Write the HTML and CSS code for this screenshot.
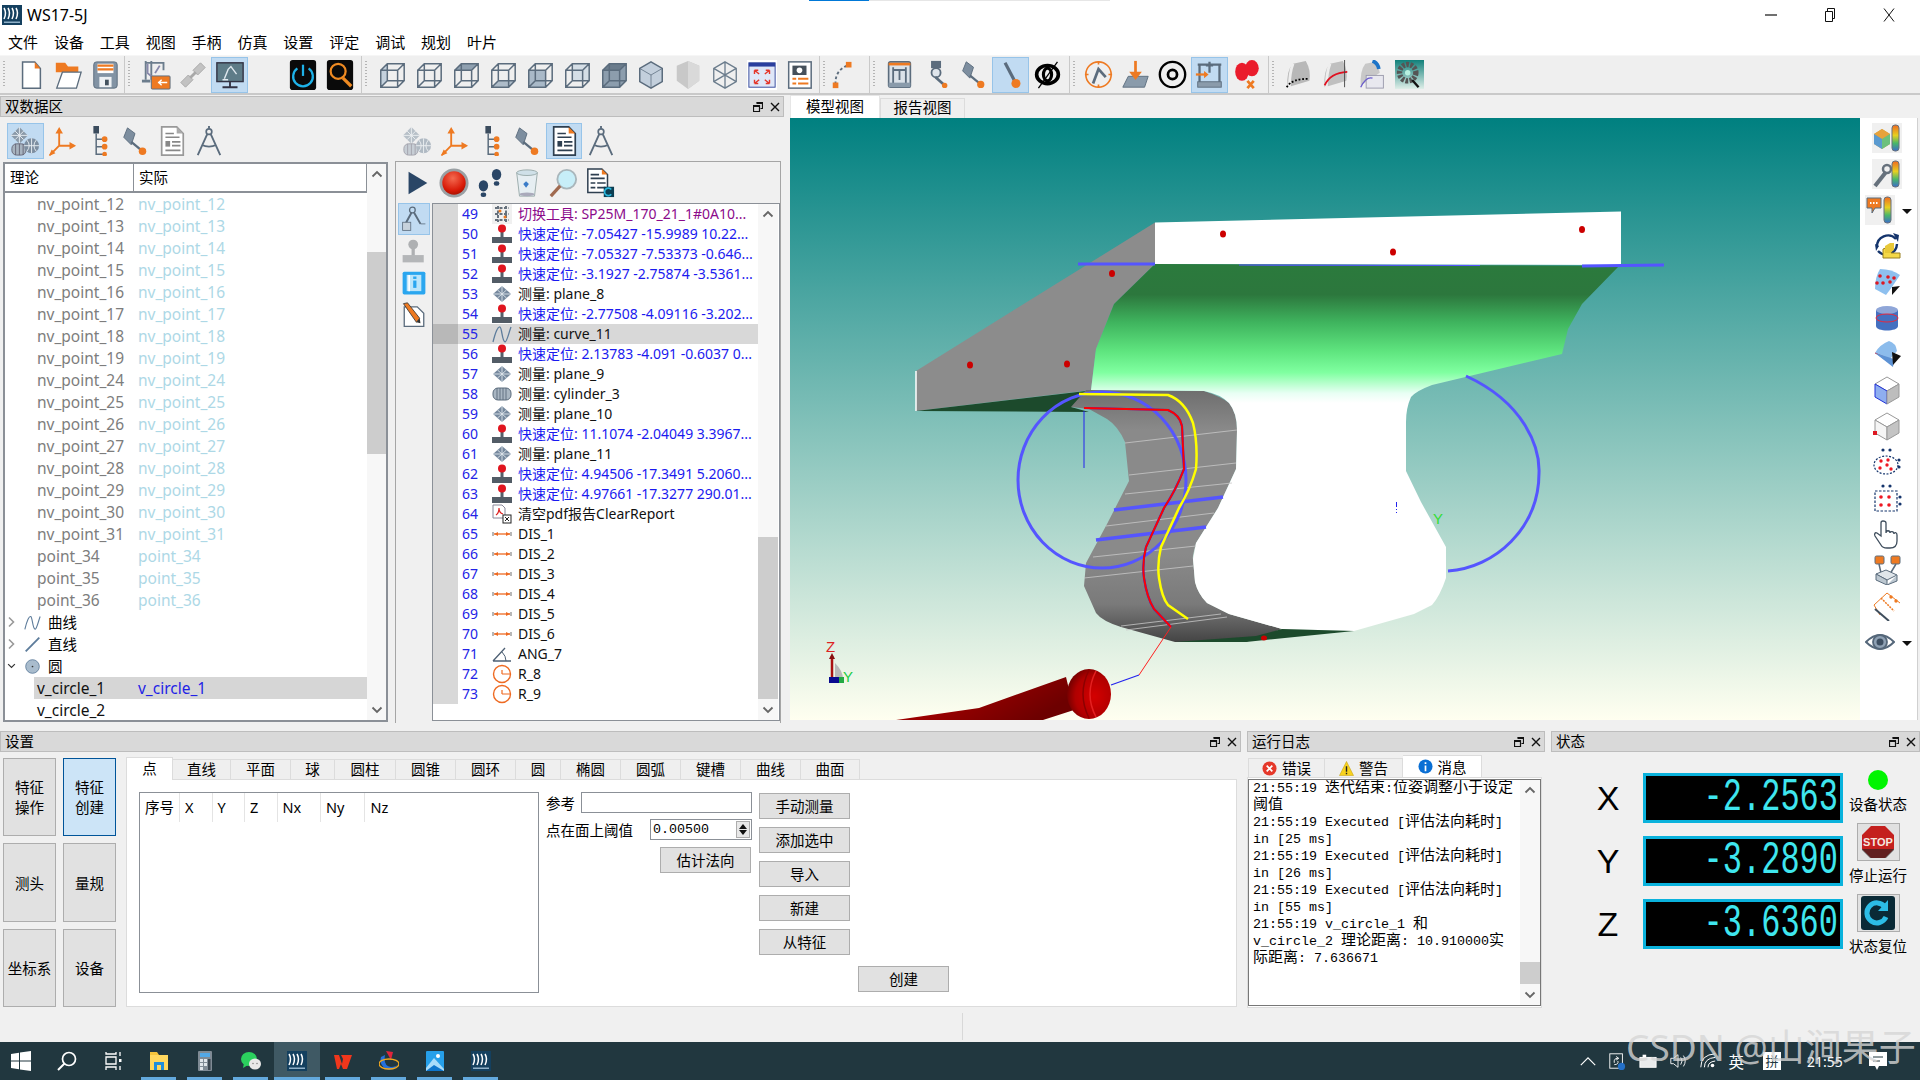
FILE: index.html
```html
<!DOCTYPE html>
<html lang="zh">
<head>
<meta charset="utf-8">
<title>WS17-5J</title>
<link rel="stylesheet" href="styles.css">
</head>
<body>
<svg class="defs" xmlns="http://www.w3.org/2000/svg">
  <symbol id="logo" viewBox="0 0 20 20"><rect width="20" height="20" fill="#14405f"/><g fill="none" stroke="#fff" stroke-width="1.5"><path d="M2 3q3 5 0 11"/><path d="M6 3q3 5 0 11"/><path d="M10 3q3 5 0 11"/><path d="M14 3q3 5 0 11"/></g><rect x="2" y="16.500" width="16" height="1.500" fill="#8fb0c8"/></symbol>
  <symbol id="pin" viewBox="0 0 10 10"><path d="M3.500 .5h6v6h-2M.5 3.500h6v6h-6zM.5 3.500" fill="none" stroke="#111" stroke-width="1.200"/><path d="M3.500 .5h6v1.500h-6zM.5 3.500h6v1.500h-6z" fill="#111"/></symbol>
  <symbol id="cls" viewBox="0 0 10 10"><path d="M1 1l8 8M9 1l-8 8" stroke="#111" stroke-width="1.400" fill="none"/></symbol>
  <symbol id="up" viewBox="0 0 12 8"><path d="M1.500 6.500L6 2l4.500 4.500" fill="none" stroke="#666" stroke-width="1.800"/></symbol>
  <symbol id="dn" viewBox="0 0 12 8"><path d="M1.500 1.500L6 6l4.500-4.500" fill="none" stroke="#666" stroke-width="1.800"/></symbol>
  <symbol id="cube" viewBox="0 0 32 32"><path d="M4 11h18v18H4zM4 11l7-7h18v18l-7 7M22 11l7-7M4 29l7-7h18M11 4v18" fill="none" stroke="#5b6c7d" stroke-width="1.600"/></symbol>

  <symbol id="new" viewBox="0 0 32 32"><path d="M7 2h13l6 7v21H7z" fill="#fff" stroke="#5b6c7d" stroke-width="1.600"/><path d="M20 2l6 7h-6z" fill="#ee7a22"/></symbol>
  <symbol id="open" viewBox="0 0 32 32"><path d="M3 3h10l3 4h11v6H3v16z" fill="#ee7a22"/><path d="M10 13h20l-5 17H4z" fill="#fff" stroke="#5b6c7d" stroke-width="1.400"/></symbol>
  <symbol id="save" viewBox="0 0 32 32"><rect x="4" y="2" width="25" height="28" rx="3" fill="#8293a4" stroke="#5b6c7d"/><rect x="8" y="4" width="17" height="10" fill="#fff"/><path d="M8 6h17M8 10h17" stroke="#ee7a22" stroke-width="2.500"/><rect x="10" y="18" width="13" height="11" fill="#eef1f4"/><rect x="16" y="21" width="4" height="6" fill="#44525f"/></symbol>
  <symbol id="robotbox" viewBox="0 0 32 32"><path d="M5 1v20M11 1v20M5 3h19v8" fill="none" stroke="#6c7d8d" stroke-width="2"/><path d="M7 4v10l6 5M20 6l-5 8" fill="none" stroke="#88a" stroke-width="2"/><rect x="1" y="21" width="9" height="3" fill="#6c7d8d"/><rect x="11" y="17" width="20" height="14" rx="1" fill="#ee7a22" stroke="#5b6c7d"/><path d="M18 24h10M22 21l-3 3 3 3" stroke="#fff" stroke-width="1.500" fill="none"/></symbol>
  <symbol id="link" viewBox="0 0 32 32"><g fill="#c2c2c2" stroke="#a8a8a8"><path d="M3 24l8-8 5 5-8 8z"/><path d="M16 11l8-8 5 5-8 8z"/></g><path d="M13 19l6-6" stroke="#a8a8a8" stroke-width="3"/></symbol>
  <symbol id="monitor" viewBox="0 0 32 32"><rect x="2" y="3" width="28" height="20" fill="#5e7c88" stroke="#334" stroke-width="1.500"/><path d="M10 20l4-10 3-3 3 4 3 4M8 21h6" fill="none" stroke="#dfe8ee" stroke-width="1.500"/><path d="M16 23v5M8 29h16" stroke="#334" stroke-width="2"/></symbol>
  <symbol id="power" viewBox="0 0 32 32"><rect x="2" y="0" width="28" height="32" rx="3" fill="#0a0a0a"/><path d="M10 9a10.500 10.500 0 1 0 12 0" fill="none" stroke="#1eb2e8" stroke-width="2.400"/><path d="M16 5v12" stroke="#1eb2e8" stroke-width="2.400"/></symbol>
  <symbol id="find" viewBox="0 0 32 32"><rect x="2" y="0" width="28" height="32" rx="3" fill="#0a0a0a"/><circle cx="14" cy="12" r="8" fill="none" stroke="#ee8a22" stroke-width="2.400"/><path d="M19 19l9 9" stroke="#ee8a22" stroke-width="3.500"/></symbol>
  <symbol id="hex" viewBox="0 0 32 32"><path d="M16 2l12 7v14l-12 7-12-7V9z" fill="#c3cfdc" stroke="#5b6c7d" stroke-width="1.600"/><path d="M4 9l12 7 12-7M16 16v14" fill="none" stroke="#5b6c7d" stroke-width=".8"/></symbol>
  <symbol id="shield" viewBox="0 0 32 32"><path d="M16 1l12 5v16l-12 9-12-9V6z" fill="#c8c8c8"/><path d="M16 1l12 5v16l-12 9z" fill="#d9d9d9"/></symbol>
  <symbol id="hexw" viewBox="0 0 32 32"><path d="M16 2l12 7v14l-12 7-12-7V9zM4 9l24 14M28 9L4 23M16 2v28" fill="none" stroke="#6c7d8d" stroke-width="1.400"/></symbol>
  <symbol id="full" viewBox="0 0 32 32"><rect width="32" height="32" fill="#fff"/><rect x="2" y="3" width="28" height="26" fill="#dfe7f8" stroke="#33479a"/><rect x="2" y="3" width="28" height="4" fill="#2a3f9e"/><path d="M8 11l5 4M8 11h4M8 11v4M24 11l-5 4M24 11h-4M24 11v4M8 25l5-4M8 25h4M8 25v-4M24 25l-5-4M24 25h-4M24 25v-4" stroke="#e4352a" stroke-width="1.500" fill="none"/></symbol>
  <symbol id="camrep" viewBox="0 0 32 32"><rect x="5" y="2" width="24" height="28" fill="#fff" stroke="#5b6c7d" stroke-width="1.600"/><rect x="9" y="6" width="15" height="10" fill="#45505b"/><circle cx="16.500" cy="11" r="3" fill="#fff"/><path d="M9 20h4M15 20h11M9 25h4M15 25h11" stroke="#ee7a22" stroke-width="2"/></symbol>
  <symbol id="curvept" viewBox="0 0 32 32"><path d="M7 26q-1-14 12-20" fill="none" stroke="#5b6c7d" stroke-width="2" stroke-dasharray="3 2.500"/><rect x="18" y="2" width="6" height="6" fill="#ee7a22"/><rect x="4" y="24" width="6" height="6" fill="#ee7a22"/></symbol>
  <symbol id="cmm" viewBox="0 0 32 32"><rect x="4" y="2" width="24" height="28" rx="2" fill="#dbe2e9" stroke="#5b6c7d" stroke-width="1.800"/><rect x="4" y="3" width="24" height="3" fill="#ee7a22"/><path d="M9 8v18M23 8v18M9 11h14M16 11v11" fill="none" stroke="#5b6c7d" stroke-width="2"/><rect x="4" y="25" width="24" height="5" fill="#8a9bab"/></symbol>
  <symbol id="probe2" viewBox="0 0 32 32"><rect x="10" y="1" width="11" height="8" fill="#5b6c7d"/><circle cx="15.500" cy="14" r="5" fill="#dfe5eb" stroke="#5b6c7d" stroke-width="2"/><path d="M15 19l9 8" stroke="#5b6c7d" stroke-width="3"/><circle cx="25" cy="28" r="3" fill="#ee7a22"/></symbol>
  <symbol id="probe" viewBox="0 0 32 32"><path d="M8 2l8 6-4 12-8-8z" fill="#7d8e9f" stroke="#5b6c7d"/><path d="M12 17l11 9" stroke="#5b6c7d" stroke-width="2.500"/><circle cx="24" cy="27" r="4" fill="#ee7a22"/></symbol>
  <symbol id="stylus" viewBox="0 0 32 32"><path d="M10 3l10 19" stroke="#5b6c7d" stroke-width="3.500"/><circle cx="22" cy="26" r="5" fill="#ee7a22"/></symbol>
  <symbol id="eyes" viewBox="0 0 32 32"><ellipse cx="16" cy="16" rx="12" ry="10" fill="none" stroke="#000" stroke-width="4"/><ellipse cx="16" cy="16" rx="4.500" ry="7" fill="none" stroke="#000" stroke-width="3.500"/><path d="M6 31L27 2" stroke="#000" stroke-width="1.400"/></symbol>
  <symbol id="armc" viewBox="0 0 32 32"><circle cx="16" cy="16" r="14" fill="none" stroke="#ee7a22" stroke-width="1.800"/><path d="M16 1v4M16 27v4M1 16h4M27 16h4" stroke="#ee7a22" stroke-width="1.800"/><path d="M10 26l6-16 8 9" fill="none" stroke="#5b6c7d" stroke-width="3"/></symbol>
  <symbol id="drop" viewBox="0 0 32 32"><path d="M8 18h22l-4 12H2z" fill="#8a9bab" stroke="#5b6c7d"/><path d="M16 1v18" stroke="#ee7a22" stroke-width="3"/><path d="M9 13h14l-7 9z" fill="#ee7a22"/></symbol>
  <symbol id="target" viewBox="0 0 32 32"><circle cx="16" cy="16" r="14" fill="none" stroke="#000" stroke-width="2.600"/><circle cx="16" cy="16" r="5" fill="none" stroke="#000" stroke-width="3"/></symbol>
  <symbol id="cmm2" viewBox="0 0 32 32"><path d="M5 5v20M27 5v20M3 5h26" fill="none" stroke="#5b6c7d" stroke-width="2.500"/><path d="M16 2v12M12 6h8" stroke="#5b6c7d" stroke-width="2.500"/><rect x="3" y="24" width="26" height="6" fill="#8a9bab" stroke="#5b6c7d"/><path d="M1 16h12" stroke="#ee7a22" stroke-width="2.500"/><path d="M10 12l5 4-5 4z" fill="#ee7a22"/></symbol>
  <symbol id="reddots" viewBox="0 0 32 32"><ellipse cx="11" cy="13" rx="7.500" ry="10" fill="#ea1c2c"/><ellipse cx="22" cy="9" rx="7.500" ry="9" fill="#ea1c2c"/><path d="M17 23l7 8M24 23l-7 8" stroke="#ee7a22" stroke-width="3"/></symbol>
  <symbol id="blade1" viewBox="0 0 32 32"><path d="M4 30q-2-18 6-26l14-3q6 10 4 22z" fill="#b8b8b8"/><path d="M10 4q-4 10-4 26" stroke="#eee" stroke-width="3" fill="none"/><path d="M3 30q6-10 25-9" fill="none" stroke="#000" stroke-width="2" stroke-dasharray="2 2"/></symbol>
  <symbol id="blade2" viewBox="0 0 32 32"><path d="M4 30q-2-18 6-26l14-3q6 10 4 22z" fill="#c0c0c0"/><path d="M10 4q-4 10-4 26" stroke="#eee" stroke-width="3" fill="none"/><path d="M4 28q6-14 25-15" fill="none" stroke="#e01020" stroke-width="2"/><path d="M26 0v30" stroke="#444"/></symbol>
  <symbol id="blade3" viewBox="0 0 32 32"><path d="M3 28q-1-16 5-24l12-2q3 6 4 12z" fill="#c8c8c8"/><rect x="9" y="17" width="19" height="14" fill="#e8e8ef" stroke="#99a"/><path d="M3 30q6-12 13-10" stroke="#6a5ccc" fill="none" stroke-width="1.500"/><path d="M16 1q6 2 7 9" stroke="#1c74c8" stroke-width="4" fill="none"/></symbol>
  <symbol id="gear" viewBox="0 0 32 32"><defs><linearGradient id="gg" x1="0" y1="0" x2="0" y2="1"><stop offset="0" stop-color="#11807a"/><stop offset="1" stop-color="#dfeee8"/></linearGradient></defs><rect width="32" height="32" fill="url(#gg)"/><circle cx="14" cy="14" r="9" fill="none" stroke="#555" stroke-width="6" stroke-dasharray="3 1.500"/><circle cx="14" cy="14" r="3" fill="#b8f0e0"/><path d="M19 22l7 8" stroke="#111" stroke-width="2.500"/></symbol>

  <symbol id="p-model" viewBox="0 0 32 32"><path d="M10 1l9 9-9 9-9-9z" fill="#8a99a8"/><path d="M5.500 5.500l9 9M14.500 5.500l-9 9M10 1v18M1 10h18" stroke="#e8eef2" stroke-width="1"/><rect x="2" y="19" width="15" height="12" rx="5" fill="#a7b3bf" stroke="#667"/><path d="M6 19v12M10 19v12M14 19v12" stroke="#667"/><circle cx="23" cy="21" r="8" fill="#7d8ea0"/><path d="M15 21h16M23 13v16M18 15q5 6 0 12M28 15q-5 6 0 12" stroke="#e8eef2" fill="none"/></symbol>
  <symbol id="p-axis" viewBox="0 0 32 32"><path d="M13 21V4M13 21h16M13 21L3 31" stroke="#ee7a22" stroke-width="2" fill="none"/><path d="M13 1l-4 7h8zM31 21l-7-4v8zM2 32l3-7 4 4z" fill="#ee7a22"/></symbol>
  <symbol id="p-tree" viewBox="0 0 32 32"><rect x="10" y="0" width="6" height="8" fill="#3b4c5e"/><path d="M13 8v22h8M13 14h8M13 22h8" stroke="#5b6c7d" stroke-width="1.600" fill="none"/><circle cx="22" cy="14" r="3" fill="#ee7a22"/><circle cx="22" cy="22" r="3" fill="#ee7a22"/><circle cx="22" cy="30" r="2.500" fill="#ee7a22"/></symbol>
  <symbol id="p-doc" viewBox="0 0 32 32"><path d="M5 1h16l7 7v23H5z" fill="#fff" stroke="#999" stroke-width="1.800"/><path d="M21 1l7 7h-7z" fill="#aaa"/><path d="M9 8h9M9 12h15M16 17h9M16 21h9M9 26h16" stroke="#888" stroke-width="1.800"/><rect x="9" y="16" width="5" height="6" fill="#888"/></symbol>
  <symbol id="p-docd" viewBox="0 0 32 32"><path d="M5 1h16l7 7v23H5z" fill="#fff" stroke="#2e3f50" stroke-width="1.800"/><path d="M21 1l7 7h-7z" fill="#ee7a22"/><path d="M9 8h9M9 12h15M16 17h9M16 21h9M9 26h16" stroke="#2e3f50" stroke-width="1.800"/><rect x="9" y="16" width="5" height="6" fill="#2e3f50"/></symbol>
  <symbol id="p-comp" viewBox="0 0 32 32"><circle cx="16" cy="6" r="3" fill="none" stroke="#5b6c7d" stroke-width="1.800"/><path d="M16 0v3M14 9L4 31M18 9l10 22M8 20q8 4 16 0" fill="none" stroke="#5b6c7d" stroke-width="2"/></symbol>
  <symbol id="t-play" viewBox="0 0 32 32"><path d="M7 4l20 12L7 28z" fill="#2a4666"/></symbol>
  <symbol id="t-rec" viewBox="0 0 32 32"><defs><radialGradient id="rr" cx=".45" cy=".3" r=".75"><stop offset="0" stop-color="#f46a50"/><stop offset=".7" stop-color="#d81a08"/><stop offset="1" stop-color="#a01000"/></radialGradient></defs><circle cx="16" cy="16" r="15.500" fill="#9aa0a4"/><circle cx="16" cy="16" r="12.500" fill="url(#rr)"/></symbol>
  <symbol id="t-foot" viewBox="0 0 32 32"><ellipse cx="9" cy="19" rx="5" ry="6" fill="#2a4666"/><rect x="6" y="26" width="6" height="5" rx="2.500" fill="#2a4666"/><ellipse cx="23" cy="7" rx="5" ry="6" fill="#2a4666"/><rect x="20" y="14" width="6" height="5" rx="2.500" fill="#2a4666"/></symbol>
  <symbol id="t-bin" viewBox="0 0 32 32"><path d="M5 5h22l-3 25H8z" fill="#e6eef2" stroke="#9aa" /><ellipse cx="16" cy="5" rx="11" ry="3" fill="#cfe0e8" stroke="#9aa"/><path d="M12 17l3-3 3 3-3 4z" fill="#3a7cc8"/><ellipse cx="16" cy="28" rx="8" ry="2" fill="#aab"/></symbol>
  <symbol id="t-mag" viewBox="0 0 32 32"><circle cx="20" cy="12" r="10" fill="#c7eef8" stroke="#a9b6bb" stroke-width="2"/><path d="M13 19L3 30" stroke="#a06a50" stroke-width="3.500"/></symbol>
  <symbol id="t-repc" viewBox="0 0 32 32"><path d="M3 1h15l6 6v19H3z" fill="#fff" stroke="#2e3f50" stroke-width="1.600"/><path d="M18 1l6 6h-6z" fill="#ee7a22"/><path d="M6 7h9M6 11h15M6 16h5M13 16h9M6 21h5M13 21h9" stroke="#2e3f50" stroke-width="1.800"/><rect x="20" y="20" width="11" height="11" fill="#0b3e52"/><path d="M28 23a4 4 0 1 0 0 5" fill="none" stroke="#29b6dc" stroke-width="1.800"/></symbol>

  <symbol id="s-arm" viewBox="0 0 32 32"><circle cx="14" cy="5" r="3.500" fill="none" stroke="#5b6c7d" stroke-width="1.600"/><path d="M13 8L6 21M16 8l8 14" fill="none" stroke="#5b6c7d" stroke-width="2.400"/><rect x="2" y="20" width="10" height="10" fill="#c7d2dc" stroke="#5b6c7d"/><path d="M24 22h6" stroke="#5b6c7d"/></symbol>
  <symbol id="s-joy" viewBox="0 0 32 32"><circle cx="15" cy="8" r="6" fill="#aeb0b2"/><rect x="13" y="12" width="4" height="10" fill="#aeb0b2"/><rect x="2" y="21" width="26" height="9" fill="#b4b6b8"/></symbol>
  <symbol id="s-info" viewBox="0 0 32 32"><rect x="2" y="2" width="28" height="28" rx="2" fill="#2aa6ef"/><rect x="7" y="6" width="18" height="20" fill="#bce5fa"/><path d="M10 6v20" stroke="#fff" stroke-width="2"/><rect x="15" y="13" width="4" height="9" fill="#2aa6ef"/><rect x="15" y="8" width="4" height="3" fill="#2aa6ef"/></symbol>
  <symbol id="s-pen" viewBox="0 0 32 32"><path d="M4 6h16l8 8v16H4z" fill="#fff" stroke="#5b6c7d" stroke-width="1.600"/><path d="M3 2l5-1 15 19-4 5z" fill="#ee7a22" stroke="#333"/><path d="M19 25l5 1-1-6z" fill="#333"/></symbol>

  <symbol id="r-tool" viewBox="0 0 20 20"><rect width="20" height="20" fill="#f0f0f0"/><path d="M3 4h14M3 10h14M3 16h14M6 2v16M14 2v16" stroke="#66717c" stroke-width="2" stroke-dasharray="3 1.500"/><circle cx="8" cy="7" r="1.500" fill="#ee7a22"/><circle cx="13" cy="13" r="1.500" fill="#ee7a22"/></symbol>
  <symbol id="r-jog" viewBox="0 0 20 20"><rect x="8.500" y="6" width="3" height="8" fill="#555f69"/><circle cx="10" cy="4.500" r="4" fill="#e0151f"/><rect x="0" y="13" width="20" height="6" fill="#525c66"/></symbol>
  <symbol id="r-plane" viewBox="0 0 20 20"><path d="M10 2l9 8-9 8-9-8z" fill="#76899e"/><path d="M5.500 6l9 8M14.500 6l-9 8M10 2v16M1 10h18" stroke="#dfe6ec" stroke-width=".9"/></symbol>
  <symbol id="r-curve" viewBox="0 0 20 20"><path d="M1 18Q5 2 8 3c2 1 2 14 5 15 2 0 4-10 6-15" fill="none" stroke="#5d7c9b" stroke-width="1.300"/></symbol>
  <symbol id="r-cyl" viewBox="0 0 20 20"><rect x="1" y="4" width="18" height="12" rx="5" fill="#a9b6c2" stroke="#5b6c7d"/><path d="M5 4v12M8 4v12M11 4v12M14 4v12" stroke="#5b6c7d" stroke-width=".9"/></symbol>
  <symbol id="r-pdf" viewBox="0 0 20 20"><path d="M1 1h9l3 3v10H1z" fill="#fff" stroke="#889"/><path d="M4 11q3-2 3-7 0 5 4 6" fill="none" stroke="#d22" stroke-width="1.200"/><rect x="11" y="11" width="8" height="8" fill="#fff" stroke="#222"/><path d="M13 13l4 4M17 13l-4 4" stroke="#222"/></symbol>
  <symbol id="r-dis" viewBox="0 0 20 20"><path d="M1 8v4M19 8v4" stroke="#999" stroke-width="1.400"/><path d="M2 10h16" stroke="#ee6a22" stroke-width="1.300"/><path d="M2 10l4-2v4zM18 10l-4-2v4z" fill="#ee6a22"/></symbol>
  <symbol id="r-ang" viewBox="0 0 20 20"><path d="M1 17h18M1 17L13 4" fill="none" stroke="#4e6074" stroke-width="1.300"/><path d="M10 8q4 4 4 9" fill="none" stroke="#4e6074"/></symbol>
  <symbol id="r-rad" viewBox="0 0 20 20"><circle cx="10" cy="10" r="8.500" fill="none" stroke="#ee6a22" stroke-width="1.400"/><path d="M10 10h8M10 6v4" stroke="#ee6a22" stroke-width="1.200"/></symbol>

  <symbol id="v-cubebar" viewBox="0 0 30 30"><rect width="30" height="30" fill="#f0f0f0"/><path d="M10 6l8 5v10l-8 5-8-5V11z" fill="#c4a24c"/><path d="M2 11l8 5 8-5-8-5z" fill="#e7a23c"/><path d="M10 16v10l-8-5V11z" fill="#5a9ad0"/><path d="M10 16v10l8-5V11z" fill="#6cc07c"/><rect x="20" y="2" width="7" height="26" rx="3" fill="url(#bar)" stroke="#66717c"/></symbol>
  <symbol id="v-wrench" viewBox="0 0 30 30"><defs><linearGradient id="bar" x1="0" y1="0" x2="0" y2="1"><stop offset="0" stop-color="#ee6a22"/><stop offset=".4" stop-color="#e8d020"/><stop offset=".7" stop-color="#48b868"/><stop offset="1" stop-color="#3c6ccc"/></linearGradient></defs><rect width="30" height="30" fill="#f0f0f0"/><path d="M3 27L14 13" stroke="#66717c" stroke-width="4"/><circle cx="15" cy="10" r="4" fill="none" stroke="#66717c" stroke-width="2.500"/><rect x="20" y="2" width="7" height="26" rx="3" fill="url(#bar)" stroke="#66717c"/></symbol>
  <symbol id="v-chat" viewBox="0 0 30 30"><rect width="30" height="30" fill="#f0f0f0"/><path d="M2 3h14v10h-6l-3 5v-5H2z" fill="#ee7a22" stroke="#5b6c7d"/><path d="M5 8h1.500M8 8h1.500M11 8h1.500" stroke="#fff" stroke-width="2"/><rect x="19" y="2" width="7" height="26" rx="3" fill="url(#bar)" stroke="#66717c"/></symbol>
  <symbol id="v-rot" viewBox="0 0 30 30"><path d="M5 16A11 11 0 0 1 24 8" fill="none" stroke="#14346c" stroke-width="2.400"/><path d="M25 13A11 11 0 0 1 6 20" fill="none" stroke="#14346c" stroke-width="2.400"/><path d="M21 2l6 2-1 7zM3 13l4 2-3 5z" fill="#14346c"/><path d="M11 18v9h17v-5h-9v-7z" fill="#f4d848" stroke="#998020"/><path d="M13 15l5-3h4v7l-4 3h-5z" fill="#e8c838"/></symbol>
  <symbol id="v-surfd" viewBox="0 0 30 30"><path d="M3 22q0-12 5-20 12 0 20 6l-8 12-6 8z" fill="#8ec0ef"/><path d="M20 20l8-1-8 9z" fill="#111"/><g fill="#dd1822"><circle cx="8" cy="9" r="1.800"/><circle cx="16" cy="10" r="1.800"/><circle cx="5" cy="16" r="1.800"/><circle cx="11" cy="16" r="1.800"/><circle cx="18" cy="15" r="1.800"/><circle cx="22" cy="11" r="1.800"/></g></symbol>
  <symbol id="v-cyl" viewBox="0 0 30 30"><path d="M4 7v16c0 6 22 6 22 0V7z" fill="#4470c0"/><ellipse cx="15" cy="7" rx="11" ry="4" fill="#8fa6d8"/><ellipse cx="15" cy="15" rx="11" ry="4" fill="none" stroke="#e8283c"/></symbol>
  <symbol id="v-surf" viewBox="0 0 30 30"><path d="M3 14q4-8 14-12 7 2 8 10l-7 8 3 7z" fill="#8cbcec"/><path d="M3 14l18 8" stroke="#e0343c"/><path d="M3 14l18 14 1-8z" fill="#5d92d4"/><path d="M20 13l9 4-8 9z" fill="#111"/></symbol>
  <symbol id="v-cube1" viewBox="0 0 30 30"><path d="M15 2l12 7-12 7-12-7z" fill="#fff" stroke="#999"/><path d="M3 9l12 7v13L3 22z" fill="#8eaef0" stroke="#2030d8"/><path d="M27 9l-12 7v13l12-7z" fill="#bdbdbd" stroke="#999"/></symbol>
  <symbol id="v-cube2" viewBox="0 0 30 30"><path d="M15 2l12 7-12 7-12-7z" fill="#fff" stroke="#999"/><path d="M3 9l12 7v13L3 22z" fill="#f5f5f5" stroke="#999"/><path d="M27 9l-12 7v13l12-7z" fill="#c4c4c4" stroke="#999"/><rect x="1" y="20" width="4" height="4" fill="#dd1822"/></symbol>
  <symbol id="v-dote" viewBox="0 0 30 30"><ellipse cx="14" cy="18" rx="12" ry="9" fill="none" stroke="#14346c" stroke-dasharray="2 1.500" stroke-width="1.200"/><g fill="#14346c"><circle cx="11" cy="3" r="1.600"/><circle cx="18" cy="3" r="1.600"/><circle cx="27" cy="13" r="1.600"/><circle cx="27" cy="20" r="1.600"/></g><g fill="#ee1822"><circle cx="9" cy="14" r="1.700"/><circle cx="16" cy="13" r="1.700"/><circle cx="8" cy="21" r="1.700"/><circle cx="15" cy="18" r="1.700"/><circle cx="19" cy="22" r="1.700"/></g></symbol>
  <symbol id="v-dotr" viewBox="0 0 30 30"><rect x="3" y="8" width="22" height="20" fill="none" stroke="#14346c" stroke-dasharray="2.500 1.500" stroke-width="1.200"/><g fill="#14346c"><circle cx="11" cy="3" r="1.600"/><circle cx="18" cy="3" r="1.600"/><circle cx="28" cy="14" r="1.600"/><circle cx="28" cy="21" r="1.600"/></g><g fill="#ee1822"><circle cx="9" cy="14" r="1.800"/><circle cx="17" cy="14" r="1.800"/><circle cx="9" cy="22" r="1.800"/><circle cx="17" cy="22" r="1.800"/></g></symbol>
  <symbol id="v-hand" viewBox="0 0 30 30"><path d="M11 2c-1.500 0-2 1-2 2v13l-4-3c-2-1-3 1-2 3l6 9c1 2 3 3 6 3h3c5 0 7-3 7-7v-6c0-3-3-3-3-1 0-3-4-3-4-1 0-3-4-3-4 0V4c0-1-1-2-3-2z" fill="#fff" stroke="#3f4e5d" stroke-width="1.300"/></symbol>
  <symbol id="v-links" viewBox="0 0 30 30"><rect x="3" y="1" width="9" height="8" rx="1.500" fill="#ee7a22" stroke="#5b6c7d"/><rect x="19" y="1" width="9" height="8" rx="1.500" fill="#ee7a22" stroke="#5b6c7d"/><path d="M7 9l2 9M24 9l-6 10" stroke="#5b6c7d" stroke-width="1.500"/><path d="M4 19l10-4 11 5-10 5z" fill="#dfe5ea" stroke="#5b6c7d"/><path d="M4 19v6l11 5v-5zM25 20v6l-10 4" fill="#bcc7d0" stroke="#5b6c7d"/></symbol>
  <symbol id="v-diag" viewBox="0 0 30 30"><path d="M2 14L15 2M8 24L2 14M15 2l13 10" stroke="#ee7a22" fill="none"/><path d="M3 18l14 12" stroke="#3f4e5d" stroke-width="2"/><path d="M9 7l13 13" stroke="#ee7a22" stroke-width="1.500" stroke-dasharray="2 1"/><circle cx="19" cy="6" r="1.700" fill="#ee7a22"/><circle cx="24" cy="10" r="1.700" fill="#ee7a22"/></symbol>
  <symbol id="v-eye" viewBox="0 0 30 30"><path d="M1 15Q15 1 29 15 15 29 1 15z" fill="#fff" stroke="#55677a" stroke-width="2"/><circle cx="15" cy="15" r="7" fill="#8fa1b4" stroke="#55677a" stroke-width="1.800"/><circle cx="15" cy="15" r="3.500" fill="#3e4f62"/></symbol>

  <symbol id="w-win" viewBox="0 0 20 20"><path d="M0 3l8-1.200V9.500H0zM9 1.600L20 0v9.500H9zM0 10.500h8v7.700L0 17zM9 10.500h11V20L9 18.400z" fill="#fff"/></symbol>
  <symbol id="w-search" viewBox="0 0 20 20"><circle cx="12" cy="8" r="6.500" fill="none" stroke="#fff" stroke-width="1.700"/><path d="M7.500 12.500L1 19" stroke="#fff" stroke-width="2"/></symbol>
  <symbol id="w-task" viewBox="0 0 20 20"><path d="M3 1v2h10V1M3 6h10v7H3zM3 19v-3h10v3" fill="none" stroke="#fff" stroke-width="1.300"/><path d="M17 1v4M17 15v4" stroke="#fff" stroke-width="1.300"/><rect x="16" y="8" width="2.500" height="3" fill="#fff"/></symbol>
  <symbol id="w-folder" viewBox="0 0 20 20"><path d="M1 1h7l2 3h9v15H1z" fill="#f4c33c"/><rect x="1" y="4" width="18" height="15" fill="#ffd75e"/><rect x="5" y="11" width="10" height="8" fill="#1f8edc"/><rect x="8" y="14" width="4" height="5" fill="#ffd75e"/></symbol>
  <symbol id="w-calc" viewBox="0 0 20 20"><rect x="3" y="0" width="14" height="20" rx="1" fill="#7f8b95"/><rect x="5" y="2" width="10" height="4" fill="#52a8e6"/><g fill="#dfe5ea"><rect x="5" y="8" width="3" height="3"/><rect x="9" y="8" width="3" height="3"/><rect x="5" y="12" width="3" height="3"/><rect x="9" y="12" width="3" height="3"/><rect x="5" y="16" width="3" height="3"/></g><rect x="13" y="8" width="2.500" height="11" fill="#3a4650"/></symbol>
  <symbol id="w-chat" viewBox="0 0 20 20"><ellipse cx="8" cy="8" rx="8" ry="7" fill="#2bd05e"/><path d="M3 12l-1 5 5-3z" fill="#2bd05e"/><ellipse cx="14" cy="13" rx="6" ry="5.500" fill="#e8e8e8"/><circle cx="12" cy="12.500" r=".8" fill="#888"/><circle cx="16" cy="12.500" r=".8" fill="#888"/></symbol>
  <symbol id="w-wps" viewBox="0 0 20 20"><path d="M1 4h5l3 9 1-5-2-4h11l-5 14h-4l-2-5-2 5H4z" fill="#f0371c"/></symbol>
  <symbol id="w-ball" viewBox="0 0 20 20"><path d="M7 0l7 1-2 8z" fill="#e0253c"/><path d="M2 6q-2 8 5 12 8 3 12-6-1 4-7 4-8-1-6-12z" fill="#2470dc"/><ellipse cx="10" cy="13" rx="10" ry="5" fill="none" stroke="#f0a820" stroke-width="1.400"/></symbol>
  <symbol id="w-photo" viewBox="0 0 20 20"><rect x="1" y="0" width="18" height="20" rx="1" fill="#26a0ea"/><path d="M1 17l8-10 10 11v2H1z" fill="#a8dcfa"/><path d="M1 20l8-6 10 6z" fill="#0e76cc"/><circle cx="13" cy="5" r="2" fill="#fff"/></symbol>
  <symbol id="w-caret" viewBox="0 0 20 12"><path d="M2 10l8-8 8 8" fill="none" stroke="#fff" stroke-width="1.300"/></symbol>
  <symbol id="w-net" viewBox="0 0 20 20"><rect x="2" y="2" width="14" height="16" fill="none" stroke="#fff"/><path d="M7 12q-1-5 4-5M9 5l3 2-3 2M11 10q1 4-4 4" fill="none" stroke="#fff"/><circle cx="15" cy="16" r="4" fill="#2470c8"/></symbol>
  <symbol id="w-bat" viewBox="0 0 20 20"><rect x="1" y="6" width="18" height="11" fill="#fff" fill-opacity=".9" stroke="#fff"/><rect x="4" y="3" width="4" height="3" fill="#fff"/></symbol>
  <symbol id="w-vol" viewBox="0 0 20 20"><path d="M2 7h3l5-4v14l-5-4H2z" fill="none" stroke="#fff"/><path d="M13 6q3 4 0 8M16 4q4 6 0 12" fill="none" stroke="#fff"/></symbol>
  <symbol id="w-wifi" viewBox="0 0 20 20"><path d="M2 17q0-14 16-15M6 17q0-10 12-11M10 17q0-6 8-7" fill="none" stroke="#fff" stroke-width="1.100"/><circle cx="15" cy="15" r="2" fill="#fff"/></symbol>
  <symbol id="w-note" viewBox="0 0 20 20"><path d="M1 1h18v14H11l-2 4-2-4H1z" fill="#fff"/><path d="M5 6h10M5 10h7" stroke="#21373f"/></symbol>
  <symbol id="w-min" viewBox="0 0 10 10"><path d="M0 5h10" stroke="#111"/></symbol>
  <symbol id="w-max" viewBox="0 0 12 14"><path d="M1.500 3.500h7v10h-7zM3.500 3.500v-3h7v10h-2" fill="none" stroke="#111"/></symbol>
  <symbol id="w-cls" viewBox="0 0 12 14"><path d="M1 .5l10 13M11 .5l-10 13" stroke="#111" fill="none"/></symbol>
</svg>

<div class="app">
  <div class="progress"><i class="p-a"></i><i class="p-b"></i></div>

  <header class="titlebar">
    <svg class="logo"><use href="#logo"/></svg>
    <span class="title-text">WS17-5J</span>
    <div class="win-btns">
      <svg class="wb"><use href="#w-min"/></svg>
      <svg class="wb"><use href="#w-max"/></svg>
      <svg class="wb"><use href="#w-cls"/></svg>
    </div>
  </header>

  <nav class="menubar">
    <span>文件</span><span>设备</span><span>工具</span><span>视图</span><span>手柄</span><span>仿真</span><span>设置</span><span>评定</span><span>调试</span><span>规划</span><span>叶片</span>
  </nav>

  <div class="toolbar">
    <div class="tgroup g1"><i class="grip"></i>
      <b class="tb"><svg><use href="#new"/></svg></b>
      <b class="tb"><svg><use href="#open"/></svg></b>
      <b class="tb"><svg><use href="#save"/></svg></b>
    </div>
    <div class="tgroup g2"><i class="grip"></i>
      <b class="tb"><svg><use href="#robotbox"/></svg></b>
      <b class="tb"><svg><use href="#link"/></svg></b>
      <b class="tb on"><svg><use href="#monitor"/></svg></b>
      <b class="tb wide"><svg><use href="#power"/></svg></b>
      <b class="tb"><svg><use href="#find"/></svg></b>
    </div>
    <div class="tgroup g3"><i class="grip"></i>
      <b class="tb"><svg viewBox="0 0 32 32"><path d="M4 11l7-7v18l-7 7z" fill="#c3d0dc"/><use href="#cube" width="32" height="32"/></svg></b>
      <b class="tb"><svg viewBox="0 0 32 32"><use href="#cube" width="32" height="32"/></svg></b>
      <b class="tb"><svg viewBox="0 0 32 32"><path d="M4 11l7-7h18l-7 7z" fill="#8fa0b0"/><use href="#cube" width="32" height="32"/></svg></b>
      <b class="tb"><svg viewBox="0 0 32 32"><path d="M4 29l7-7h18l-7 7z" fill="#aebcc9"/><use href="#cube" width="32" height="32"/></svg></b>
      <b class="tb"><svg viewBox="0 0 32 32"><path d="M4 11h18v18H4z" fill="#a9b9c8"/><use href="#cube" width="32" height="32"/></svg></b>
      <b class="tb"><svg viewBox="0 0 32 32"><path d="M11 4h18v18H11z" fill="#d5dee6"/><use href="#cube" width="32" height="32"/></svg></b>
      <b class="tb"><svg viewBox="0 0 32 32"><path d="M4 11l7-7h18v18l-7 7H4z" fill="#8c9dad"/><path d="M4 11l7-7h18l-7 7z" fill="#6b7c8c"/><use href="#cube" width="32" height="32"/></svg></b>
      <b class="tb"><svg><use href="#hex"/></svg></b>
      <b class="tb"><svg><use href="#shield"/></svg></b>
      <b class="tb"><svg><use href="#hexw"/></svg></b>
      <b class="tb"><svg><use href="#full"/></svg></b>
      <b class="tb"><svg><use href="#camrep"/></svg></b>
    </div>
    <div class="tgroup g4"><i class="grip"></i>
      <b class="tb"><svg><use href="#curvept"/></svg></b>
    </div>
    <div class="tgroup g5"><i class="grip"></i>
      <b class="tb"><svg><use href="#cmm"/></svg></b>
      <b class="tb"><svg><use href="#probe2"/></svg></b>
      <b class="tb"><svg><use href="#probe"/></svg></b>
      <b class="tb on"><svg><use href="#stylus"/></svg></b>
      <b class="tb"><svg><use href="#eyes"/></svg></b>
    </div>
    <div class="tgroup g6"><i class="grip"></i>
      <b class="tb"><svg><use href="#armc"/></svg></b>
      <b class="tb"><svg><use href="#drop"/></svg></b>
      <b class="tb"><svg><use href="#target"/></svg></b>
      <b class="tb on"><svg><use href="#cmm2"/></svg></b>
      <b class="tb"><svg><use href="#reddots"/></svg></b>
    </div>
    <div class="tgroup g7"><i class="grip"></i>
      <b class="tb"><svg><use href="#blade1"/></svg></b>
      <b class="tb"><svg><use href="#blade2"/></svg></b>
      <b class="tb"><svg><use href="#blade3"/></svg></b>
      <b class="tb"><svg><use href="#gear"/></svg></b>
    </div>
  </div>

  <main class="main">
    <section class="dock data-dock">
      <div class="dock-title"><span>双数据区</span><svg class="ctl"><use href="#pin"/></svg><svg class="ctl"><use href="#cls"/></svg></div>
      <div class="data-cols">
        <div class="sub-left">
          <div class="ptools">
            <b class="tb on"><svg><use href="#p-model"/></svg></b>
            <b class="tb"><svg><use href="#p-axis"/></svg></b>
            <b class="tb"><svg><use href="#p-tree"/></svg></b>
            <b class="tb"><svg><use href="#probe"/></svg></b>
            <b class="tb"><svg><use href="#p-doc"/></svg></b>
            <b class="tb"><svg><use href="#p-comp"/></svg></b>
          </div>
          <div class="tree">
            <div class="tree-main">
              <div class="tree-head"><span class="h1">理论</span><span class="h2">实际</span></div>
              <div class="trow"><span class="nm">nv_point_12</span><span class="ac">nv_point_12</span></div>
              <div class="trow"><span class="nm">nv_point_13</span><span class="ac">nv_point_13</span></div>
              <div class="trow"><span class="nm">nv_point_14</span><span class="ac">nv_point_14</span></div>
              <div class="trow"><span class="nm">nv_point_15</span><span class="ac">nv_point_15</span></div>
              <div class="trow"><span class="nm">nv_point_16</span><span class="ac">nv_point_16</span></div>
              <div class="trow"><span class="nm">nv_point_17</span><span class="ac">nv_point_17</span></div>
              <div class="trow"><span class="nm">nv_point_18</span><span class="ac">nv_point_18</span></div>
              <div class="trow"><span class="nm">nv_point_19</span><span class="ac">nv_point_19</span></div>
              <div class="trow"><span class="nm">nv_point_24</span><span class="ac">nv_point_24</span></div>
              <div class="trow"><span class="nm">nv_point_25</span><span class="ac">nv_point_25</span></div>
              <div class="trow"><span class="nm">nv_point_26</span><span class="ac">nv_point_26</span></div>
              <div class="trow"><span class="nm">nv_point_27</span><span class="ac">nv_point_27</span></div>
              <div class="trow"><span class="nm">nv_point_28</span><span class="ac">nv_point_28</span></div>
              <div class="trow"><span class="nm">nv_point_29</span><span class="ac">nv_point_29</span></div>
              <div class="trow"><span class="nm">nv_point_30</span><span class="ac">nv_point_30</span></div>
              <div class="trow"><span class="nm">nv_point_31</span><span class="ac">nv_point_31</span></div>
              <div class="trow"><span class="nm">point_34</span><span class="ac">point_34</span></div>
              <div class="trow"><span class="nm">point_35</span><span class="ac">point_35</span></div>
              <div class="trow"><span class="nm">point_36</span><span class="ac">point_36</span></div>
              <div class="trow grp"><svg class="chev" viewBox="0 0 8 12"><path d="M1.500 1.500L6 6l-4.500 4.500" fill="none" stroke="#999" stroke-width="1.600"/></svg><svg class="gi" viewBox="0 0 20 20"><use href="#r-curve" width="20" height="20"/></svg><span>曲线</span></div>
              <div class="trow grp"><svg class="chev" viewBox="0 0 8 12"><path d="M1.500 1.500L6 6l-4.500 4.500" fill="none" stroke="#999" stroke-width="1.600"/></svg><svg class="gi" viewBox="0 0 20 20"><path d="M2 18L18 2" stroke="#5d7c9b" stroke-width="2.200"/></svg><span>直线</span></div>
              <div class="trow grp"><svg class="chev" viewBox="0 0 12 12"><path d="M1.500 3.500L6 8l4.500-4.500" fill="none" stroke="#333" stroke-width="1.600"/></svg><svg class="gi" viewBox="0 0 20 20"><circle cx="10" cy="10" r="8" fill="#a9bccd" stroke="#5d7c9b"/><circle cx="10" cy="10" r="1" fill="#333"/></svg><span>圆</span></div>
              <div class="trow dark sel"><span class="nm">v_circle_1</span><span class="ac">v_circle_1</span></div>
              <div class="trow dark"><span class="nm">v_circle_2</span></div>
            </div>
            <div class="sb"><svg class="sa"><use href="#up"/></svg><i class="thumb th-tree"></i><svg class="sa"><use href="#dn"/></svg></div>
          </div>
        </div>

        <div class="sub-right">
          <div class="ptools pt-r">
            <b class="tb dim"><svg><use href="#p-model"/></svg></b>
            <b class="tb"><svg><use href="#p-axis"/></svg></b>
            <b class="tb"><svg><use href="#p-tree"/></svg></b>
            <b class="tb"><svg><use href="#probe"/></svg></b>
            <b class="tb on"><svg><use href="#p-docd"/></svg></b>
            <b class="tb"><svg><use href="#p-comp"/></svg></b>
          </div>
          <div class="prog">
            <div class="prog-tools">
              <b class="tb tn"><svg><use href="#t-play"/></svg></b>
              <b class="tb tn"><svg><use href="#t-rec"/></svg></b>
              <b class="tb tn"><svg><use href="#t-foot"/></svg></b>
              <b class="tb tn"><svg><use href="#t-bin"/></svg></b>
              <b class="tb tn"><svg><use href="#t-mag"/></svg></b>
              <b class="tb tn"><svg><use href="#t-repc"/></svg></b>
            </div>
            <div class="prog-body">
              <div class="strip">
                <b class="si on"><svg><use href="#s-arm"/></svg></b>
                <b class="si"><svg><use href="#s-joy"/></svg></b>
                <b class="si"><svg><use href="#s-info"/></svg></b>
                <b class="si"><svg><use href="#s-pen"/></svg></b>
              </div>
              <div class="plist">
                <div class="plist-rows">
                  <div class="row tool"><span class="ln">49</span><svg class="ri"><use href="#r-tool"/></svg><span class="rt">切换工具: SP25M_170_21_1#0A10...</span></div>
                  <div class="row jog"><span class="ln">50</span><svg class="ri"><use href="#r-jog"/></svg><span class="rt">快速定位: -7.05427 -15.9989 10.22...</span></div>
                  <div class="row jog"><span class="ln">51</span><svg class="ri"><use href="#r-jog"/></svg><span class="rt">快速定位: -7.05327 -7.53373 -0.646...</span></div>
                  <div class="row jog"><span class="ln">52</span><svg class="ri"><use href="#r-jog"/></svg><span class="rt">快速定位: -3.1927 -2.75874 -3.5361...</span></div>
                  <div class="row"><span class="ln">53</span><svg class="ri"><use href="#r-plane"/></svg><span class="rt">测量: plane_8</span></div>
                  <div class="row jog"><span class="ln">54</span><svg class="ri"><use href="#r-jog"/></svg><span class="rt">快速定位: -2.77508 -4.09116 -3.202...</span></div>
                  <div class="row sel"><span class="ln">55</span><svg class="ri"><use href="#r-curve"/></svg><span class="rt">测量: curve_11</span></div>
                  <div class="row jog"><span class="ln">56</span><svg class="ri"><use href="#r-jog"/></svg><span class="rt">快速定位: 2.13783 -4.091 -0.6037 0...</span></div>
                  <div class="row"><span class="ln">57</span><svg class="ri"><use href="#r-plane"/></svg><span class="rt">测量: plane_9</span></div>
                  <div class="row"><span class="ln">58</span><svg class="ri"><use href="#r-cyl"/></svg><span class="rt">测量: cylinder_3</span></div>
                  <div class="row"><span class="ln">59</span><svg class="ri"><use href="#r-plane"/></svg><span class="rt">测量: plane_10</span></div>
                  <div class="row jog"><span class="ln">60</span><svg class="ri"><use href="#r-jog"/></svg><span class="rt">快速定位: 11.1074 -2.04049 3.3967...</span></div>
                  <div class="row"><span class="ln">61</span><svg class="ri"><use href="#r-plane"/></svg><span class="rt">测量: plane_11</span></div>
                  <div class="row jog"><span class="ln">62</span><svg class="ri"><use href="#r-jog"/></svg><span class="rt">快速定位: 4.94506 -17.3491 5.2060...</span></div>
                  <div class="row jog"><span class="ln">63</span><svg class="ri"><use href="#r-jog"/></svg><span class="rt">快速定位: 4.97661 -17.3277 290.01...</span></div>
                  <div class="row"><span class="ln">64</span><svg class="ri"><use href="#r-pdf"/></svg><span class="rt">清空pdf报告ClearReport</span></div>
                  <div class="row"><span class="ln">65</span><svg class="ri"><use href="#r-dis"/></svg><span class="rt">DIS_1</span></div>
                  <div class="row"><span class="ln">66</span><svg class="ri"><use href="#r-dis"/></svg><span class="rt">DIS_2</span></div>
                  <div class="row"><span class="ln">67</span><svg class="ri"><use href="#r-dis"/></svg><span class="rt">DIS_3</span></div>
                  <div class="row"><span class="ln">68</span><svg class="ri"><use href="#r-dis"/></svg><span class="rt">DIS_4</span></div>
                  <div class="row"><span class="ln">69</span><svg class="ri"><use href="#r-dis"/></svg><span class="rt">DIS_5</span></div>
                  <div class="row"><span class="ln">70</span><svg class="ri"><use href="#r-dis"/></svg><span class="rt">DIS_6</span></div>
                  <div class="row"><span class="ln">71</span><svg class="ri"><use href="#r-ang"/></svg><span class="rt">ANG_7</span></div>
                  <div class="row"><span class="ln">72</span><svg class="ri"><use href="#r-rad"/></svg><span class="rt">R_8</span></div>
                  <div class="row"><span class="ln">73</span><svg class="ri"><use href="#r-rad"/></svg><span class="rt">R_9</span></div>
                </div>
                <div class="sb"><svg class="sa"><use href="#up"/></svg><i class="thumb th-list"></i><svg class="sa"><use href="#dn"/></svg></div>
              </div>
            </div>
          </div>
        </div>
      </div>
    </section>

    <section class="viewcol">
      <div class="vtabs"><span class="vtab on">模型视图</span><span class="vtab">报告视图</span></div>
      <div class="viewrow">
        <div class="scene">
          <svg class="scene-svg" viewBox="0 0 1070 602" xmlns="http://www.w3.org/2000/svg">
            <defs>
              <linearGradient id="gGreen" gradientUnits="userSpaceOnUse" x1="0" y1="146" x2="0" y2="285">
                <stop offset="0" stop-color="#2b7a3d"/><stop offset=".22" stop-color="#2c773d"/><stop offset=".42" stop-color="#3fb45e"/><stop offset=".63" stop-color="#5fe57f"/><stop offset=".78" stop-color="#7fffa0"/><stop offset=".93" stop-color="#e8fff4"/><stop offset="1" stop-color="#fff"/>
              </linearGradient>
              <linearGradient id="gBand" gradientUnits="userSpaceOnUse" x1="0" y1="272" x2="0" y2="524">
                <stop offset="0" stop-color="#6e6e6e"/><stop offset=".16" stop-color="#8a8a8a"/><stop offset=".65" stop-color="#8a8a8a"/><stop offset=".85" stop-color="#7a7a7a"/><stop offset="1" stop-color="#444"/>
              </linearGradient>
              <linearGradient id="gStem" gradientUnits="userSpaceOnUse" x1="200" y1="560" x2="230" y2="610">
                <stop offset="0" stop-color="#9a0000"/><stop offset="1" stop-color="#6d0000"/>
              </linearGradient>
              <radialGradient id="gBall" cx=".62" cy=".55" r=".62">
                <stop offset="0" stop-color="#d40000"/><stop offset=".7" stop-color="#b00000"/><stop offset="1" stop-color="#760000"/>
              </radialGradient>
            </defs>
            <polygon points="365,104.500 126,253 126,293 301,272 306,231 324,186 365,146" fill="#8c8c8c"/>
            <path d="M126 253V293" stroke="#fff" stroke-width="1.500"/>
            <polygon points="365,104.500 831,93.600 831,147 365,146" fill="#fff"/>
            <polygon points="126,293 296,273 414,273 381,280 281,289 299,294" fill="#1c4a2c"/>
            <path d="M296 272 L414 273 Q432 279 439 285 Q447 295 447 312 L446 351 L428 390 L406 425 Q402 440 403 441 L405 464 Q408 476 417 485 L439 496 L492 511 L456 524 H385 L331 509 Q312 503 306 495 L294 468 L296 445 L317 406 L339 363 L335 324 Q328 308 317 301 L299 291 L281 289 Z" fill="url(#gBand)"/>
            <path d="M365 146 L829 148 L792 186 L778 211 L772 236 L642 267 Q626 273 621 279 Q616 290 616 304 V353 L631 384 L656 429 V460 Q650 478 642 487 L624 496 L564 513 L492 511 L439 496 L417 485 Q408 476 405 464 L403 441 L406 425 L428 390 L446 351 L447 312 Q447 295 439 285 Q430 276 414 273 L301 272 L306 231 L324 186 Z" fill="url(#gGreen)"/>
            <polygon points="385,524 456,524 564,513 492,511 466,518" fill="#1c4a2c"/>
            <g stroke="#c8c8c8" stroke-width=".8" fill="none">
              <path d="M335 325L447 312M339 357L446 345M335 376L442 365M316 408L424 395M303 439L406 428M294 460L403 448M331 508L431 496M336 512L437 499"/>
            </g>
            <ellipse cx="312" cy="362" rx="84" ry="88" fill="none" stroke="#5555ff" stroke-width="3"/>
            <path d="M676 258 C735 285 750 330 749 355 C749 410 705 450 658 453" fill="none" stroke="#5555ff" stroke-width="3"/>
            <g stroke="#5555ff" fill="none">
              <path d="M288 146H365M792 148L874 147" stroke-width="3"/>
              <path d="M449 147L690 147.500" stroke-width="1.200"/>
              <path d="M324 392L433 379M306 422L416 409" stroke-width="3.500"/>
            </g>
            <path d="M289 276L378 277Q395 283 403 305Q408 325 406 351Q400 372 389 390L371 429Q367 445 369 460Q372 480 378 487L398 501" fill="none" stroke="#ffff00" stroke-width="2.500"/>
            <path d="M294 290L378 292Q390 297 392 308L394 351Q386 372 374 390L356 429Q352 445 354 460Q357 480 364 491L381 509" fill="none" stroke="#2222ee" stroke-width="2.200"/>
            <path d="M294 290L378 292Q390 297 392 308L394 351Q386 372 374 390L356 429Q352 445 354 460Q357 480 364 491L381 509" fill="none" stroke="#ff0000" stroke-width="1.900"/>
            <path d="M381 509L349 557" stroke="#ff2020" fill="none"/>
            <path d="M349 557L321 567" stroke="#2222ee" stroke-width="1.200" fill="none"/>
            <path d="M294 293V350" stroke="#2222ee" fill="none"/>
            <path d="M606.500 384v5M606.500 391v1M606.500 394v1" stroke="#2222ee"/>
            <g fill="#cc0000">
              <ellipse cx="433" cy="116" rx="3" ry="3.500"/><ellipse cx="603" cy="134" rx="3" ry="3.500"/><ellipse cx="792" cy="111.500" rx="3" ry="3.500"/><ellipse cx="322" cy="155.500" rx="3" ry="3.500"/><ellipse cx="180" cy="247" rx="3" ry="3.500"/><ellipse cx="277" cy="246" rx="3" ry="3.500"/><ellipse cx="474" cy="520" rx="3" ry="2.500"/>
            </g>
            <text class="lbl" x="643" y="406" fill="#33dd33">Y</text>
            <path d="M42 538V561" stroke="#aa1111" stroke-width="2.500"/>
            <path d="M39 541l3-6 3 6z" fill="#881111"/>
            <path d="M45 545q8 8 8 16h-8z" fill="#b8b8b8"/>
            <rect x="39" y="559" width="10" height="6" fill="#0a0a90"/>
            <rect x="49" y="559" width="5" height="6" fill="#22aa44"/>
            <text class="lbl" x="36" y="534" fill="#dd2222">Z</text>
            <text class="lbl" x="53" y="564" fill="#22cc44">Y</text>
            <path d="M106 602L189 590L276 559L284 592L253 602Z" fill="url(#gStem)"/>
            <ellipse cx="299" cy="576" rx="22" ry="25" fill="url(#gBall)"/>
            <path d="M299 552q-12 24 0 48" fill="none" stroke="#8c0000" stroke-width="1.500"/>
            <path d="M306 553q-12 23 0 46" fill="none" stroke="#e42020" stroke-width="1.500"/>
          </svg>
        </div>
        <div class="vstrip">
          <b class="vi"><svg><use href="#v-cubebar"/></svg></b>
          <b class="vi"><svg><use href="#v-wrench"/></svg></b>
          <b class="vi drop"><svg><use href="#v-chat"/></svg><i class="tri"></i></b>
          <b class="vi"><svg><use href="#v-rot"/></svg></b>
          <b class="vi"><svg><use href="#v-surfd"/></svg></b>
          <b class="vi"><svg><use href="#v-cyl"/></svg></b>
          <b class="vi"><svg><use href="#v-surf"/></svg></b>
          <b class="vi"><svg><use href="#v-cube1"/></svg></b>
          <b class="vi"><svg><use href="#v-cube2"/></svg></b>
          <b class="vi"><svg><use href="#v-dote"/></svg></b>
          <b class="vi"><svg><use href="#v-dotr"/></svg></b>
          <b class="vi"><svg><use href="#v-hand"/></svg></b>
          <b class="vi"><svg><use href="#v-links"/></svg></b>
          <b class="vi"><svg><use href="#v-diag"/></svg></b>
          <b class="vi drop"><svg><use href="#v-eye"/></svg><i class="tri"></i></b>
        </div>
      </div>
    </section>
  </main>

  <section class="bottom">
    <div class="dock set-dock">
      <div class="dock-title"><span>设置</span><svg class="ctl"><use href="#pin"/></svg><svg class="ctl"><use href="#cls"/></svg></div>
      <div class="set-body">
        <div class="side-btns">
          <button class="sbtn">特征<br>操作</button>
          <button class="sbtn on">特征<br>创建</button>
          <button class="sbtn">测头</button>
          <button class="sbtn">量规</button>
          <button class="sbtn">坐标系</button>
          <button class="sbtn">设备</button>
        </div>
        <div class="tabw">
          <div class="tabbar">
            <span class="tab on t47">点</span><span class="tab t58">直线</span><span class="tab t60">平面</span><span class="tab t44">球</span><span class="tab t61">圆柱</span><span class="tab t60">圆锥</span><span class="tab t60">圆环</span><span class="tab t45">圆</span><span class="tab t60">椭圆</span><span class="tab t60">圆弧</span><span class="tab t60">键槽</span><span class="tab t60">曲线</span><span class="tab t59">曲面</span>
          </div>
          <div class="tabpanel">
            <div class="ftable">
              <div class="fhead">
                <span class="c c1">序号</span><span class="c c2">X</span><span class="c c2">Y</span><span class="c c2">Z</span><span class="c c3">Nx</span><span class="c c3">Ny</span><span class="c c4">Nz</span>
              </div>
            </div>
            <div class="form">
              <div class="frow"><label class="l1">参考</label><span class="inp"></span></div>
              <div class="frow f2"><label class="l2">点在面上阈值</label><span class="spin"><span class="val">0.00500</span><span class="sbx"><i class="sup"></i><i class="sdn"></i></span></span></div>
              <button class="btn est">估计法向</button>
            </div>
            <div class="btn-col">
              <button class="btn">手动测量</button>
              <button class="btn">添加选中</button>
              <button class="btn">导入</button>
              <button class="btn">新建</button>
              <button class="btn">从特征</button>
            </div>
            <div class="create-col"><button class="btn">创建</button></div>
          </div>
        </div>
      </div>
      <div class="statusline"><i></i></div>
    </div>

    <div class="dock log-dock">
      <div class="dock-title"><span>运行日志</span><svg class="ctl"><use href="#pin"/></svg><svg class="ctl"><use href="#cls"/></svg></div>
      <div class="ltabs">
        <span class="ltab t-e"><svg viewBox="0 0 16 16"><circle cx="8" cy="8" r="7.500" fill="#e5382a"/><path d="M5 5l6 6M11 5l-6 6" stroke="#fff" stroke-width="1.800"/></svg>错误</span>
        <span class="ltab t-w"><svg viewBox="0 0 16 16"><path d="M8 .5l7.500 15H.5z" fill="#f7d21e" stroke="#c8a010" stroke-width=".6"/><path d="M8 5.500v6M8 12.500v1.500" stroke="#222" stroke-width="1.500"/></svg>警告</span>
        <span class="ltab t-i on"><svg viewBox="0 0 16 16"><circle cx="8" cy="8" r="7.500" fill="#0a6fd4"/><path d="M8 7v6M8 3.500v1.800" stroke="#fff" stroke-width="1.800"/></svg>消息</span>
      </div>
      <div class="logframe">
        <div class="logbox">
          <div class="logtext">21:55:19 <u>迭代结束</u>:<u>位姿调整小于设定</u><br><u>阈值</u><br>21:55:19 Executed [<u>评估法向耗时</u>]<br>in [25 ms]<br>21:55:19 Executed [<u>评估法向耗时</u>]<br>in [26 ms]<br>21:55:19 Executed [<u>评估法向耗时</u>]<br>in [55 ms]<br>21:55:19 v_circle_1 <u>和</u><br>v_circle_2 <u>理论距离</u>: 10.910000<u>实</u><br><u>际距离</u>: 7.636671</div>
          <div class="sb"><svg class="sa"><use href="#up"/></svg><i class="thumb th-log"></i><svg class="sa"><use href="#dn"/></svg></div>
        </div>
      </div>
    </div>

    <div class="dock stat-dock">
      <div class="dock-title"><span>状态</span><svg class="ctl"><use href="#pin"/></svg><svg class="ctl"><use href="#cls"/></svg></div>
      <div class="stat-body">
        <div class="axes">
          <div class="axrow"><span class="axl">X</span><div class="lcd"><span>-2.2563</span></div></div>
          <div class="axrow"><span class="axl">Y</span><div class="lcd"><span>-3.2890</span></div></div>
          <div class="axrow"><span class="axl">Z</span><div class="lcd"><span>-3.6360</span></div></div>
        </div>
        <div class="stat-side">
          <i class="led"></i>
          <span class="stl">设备状态</span>
          <div class="stbtn"><svg viewBox="0 0 34 34"><path d="M10 1h14l9 9v14l-9 9H10l-9-9V10z" fill="#c4201e"/><path d="M1 24h32v1l-8 8H9l-8-8z" fill="#222" opacity=".6"/><text class="stop" x="17" y="21">STOP</text></svg></div>
          <span class="stl">停止运行</span>
          <div class="stbtn"><svg viewBox="0 0 34 34"><rect width="34" height="34" rx="3" fill="#0a2a36"/><path d="M25 21a10 10 0 1 1-1-10" fill="none" stroke="#2cbde6" stroke-width="5"/><path d="M27 4v11H17z" fill="#2cbde6"/></svg></div>
          <span class="stl">状态复位</span>
        </div>
      </div>
    </div>
  </section>

  <footer class="taskbar">
    <b class="ti t-start"><svg><use href="#w-win"/></svg></b>
    <b class="ti"><svg><use href="#w-search"/></svg></b>
    <b class="ti"><svg><use href="#w-task"/></svg></b>
    <b class="ti app-i run"><svg><use href="#w-folder"/></svg></b>
    <b class="ti app-i run"><svg><use href="#w-calc"/></svg></b>
    <b class="ti app-i run"><svg><use href="#w-chat"/></svg></b>
    <b class="ti app-i run act"><svg><use href="#logo"/></svg></b>
    <b class="ti app-i run"><svg><use href="#w-wps"/></svg></b>
    <b class="ti app-i run"><svg><use href="#w-ball"/></svg></b>
    <b class="ti app-i run"><svg><use href="#w-photo"/></svg></b>
    <b class="ti app-i run"><svg><use href="#logo"/></svg></b>
    <div class="tray">
      <svg class="tr t-caret"><use href="#w-caret"/></svg>
      <svg class="tr tg11"><use href="#w-net"/></svg>
      <svg class="tr tg13"><use href="#w-bat"/></svg>
      <svg class="tr"><use href="#w-vol"/></svg>
      <svg class="tr"><use href="#w-wifi"/></svg>
      <span class="tr-t">英</span>
      <span class="tr-pin">拼</span>
      <span class="tr-time">21:55</span>
      <svg class="tr t-note"><use href="#w-note"/></svg>
    </div>
  </footer>
  <div class="watermark">CSDN @山涧果子</div>
</div>
</body>
</html>
```

FILE: styles.css
```css
* { box-sizing: border-box; }
html, body { margin: 0; padding: 0; }
body { font-family: "Noto Sans", "Noto Sans CJK SC", sans-serif; font-size: 14.5px; color: #000; background: #f0f0f0; width: 1920px; height: 1080px; overflow: hidden; }
.defs { display: block; width: 0; height: 0; overflow: hidden; }
b, i { font-weight: normal; font-style: normal; display: block; }
u { text-decoration: none; }
button { font: inherit; color: inherit; padding: 0; }

.app { position: relative; width: 1920px; height: 1080px; display: flex; flex-direction: column; background: #f0f0f0; }

.progress { display: flex; height: 1px; padding-left: 809px; background: #fff; flex: none; }
.p-a { width: 60px; background: #0078d7; }
.p-b { width: 241px; background: #e6e6e6; }

.titlebar { height: 28px; flex: none; background: #fff; display: flex; align-items: center; padding-left: 2px; }
.logo { width: 20px; height: 20px; }
.title-text { margin-left: 5px; font-size: 16px; }
.win-btns { margin-left: auto; display: flex; padding-right: 25px; gap: 47px; align-items: center; }
.wb { width: 12px; height: 14px; }

.menubar { height: 26px; flex: none; background: #fff; display: flex; align-items: center; padding-left: 8px; font-size: 15px; line-height: 26px; }
.menubar span { width: 45.900px; }

.toolbar { height: 40px; flex: none; display: flex; background: #efefef; border-top: 1px solid #f6f6f6; border-bottom: 2px solid #c9c9c9; }
.tgroup { display: flex; align-items: center; border-right: 1px solid #c9c9c9; height: 37px; position: relative; flex: none; }
.grip { position: absolute; left: 3px; top: 5px; width: 2px; height: 27px; background: repeating-linear-gradient(#b4b4b4 0 1px, transparent 1px 3px); }
.tb { width: 37px; height: 36px; display: flex; align-items: center; justify-content: center; flex: none; border: 1px solid transparent; }
.tb svg { width: 30px; height: 30px; }
.tb.on { background: #c1dbf2; border-color: #97c4e9; }
.tb.dim svg { opacity: .55; }
.g1 { width: 125px; padding-left: 12px; }
.g2 { width: 237px; padding-left: 12px; }
.g2 .wide { margin-left: 36px; }
.g3 { width: 458px; padding-left: 11px; }
.g4 { width: 50px; padding-left: 5px; }
.g5 { width: 200px; padding-left: 11px; }
.g6 { width: 199px; padding-left: 10px; }
.g7 { width: 200px; padding-left: 11px; border-right: 0; }
.toolbar .tgroup:nth-child(n+5) .tb svg { width: 29px; height: 29px; }

.main { height: 630px; flex: none; display: flex; }
.dock-title { height: 21px; flex: none; background: #d9d9d9; border: 1px solid #bdbdbd; display: flex; align-items: center; padding: 0 3px 0 4px; font-size: 14.5px; line-height: 19px; }
.dock-title span { margin-right: auto; }
.ctl { width: 10px; height: 10px; margin-left: 7px; }

.data-dock { width: 784px; flex: none; padding-top: 1px; display: flex; flex-direction: column; }
.data-cols { display: flex; margin-top: 6px; }
.sub-left { width: 395px; flex: none; padding-left: 3px; }
.ptools { display: flex; height: 36px; padding-left: 4px; }
.sub-left .ptools { margin-bottom: 3px; }
.ptools .tb { width: 36.700px; }
.ptools .tb svg { width: 30px; height: 30px; }
.pt-r { padding-left: 4px; margin-bottom: 2px; }

.tree { width: 385px; height: 560px; border: 2px solid #8b9097; display: flex; background: #fff; overflow: hidden; }
.tree-main { width: 362px; flex: none; overflow: hidden; }
.tree-head { height: 29px; display: flex; border-bottom: 2px solid #8b9097; font-size: 14.5px; line-height: 26px; }
.tree-head .h1 { width: 129px; padding-left: 5px; border-right: 1.500px solid #8b9097; }
.tree-head .h2 { flex: 1; padding-left: 5px; border-right: 1.500px solid #8b9097; }
.trow { height: 22px; display: flex; align-items: center; font-size: 15.500px; line-height: 22px; white-space: nowrap; }
.nm { width: 129px; padding-left: 32px; color: #7d7d7d; flex: none; }
.ac { padding-left: 4px; color: #add8e6; }
.trow.dark .nm { color: #111; }
.trow.sel { background: linear-gradient(90deg, transparent 29px, #d6d6d6 29px); }
.trow.sel .ac { color: #1f1fe6; }
.grp { font-size: 14.500px; padding-left: 2px; }
.chev { width: 9px; height: 12px; flex: none; }
.gi { width: 17px; height: 17px; margin-left: 8px; flex: none; }
.grp span { margin-left: 7px; }

.sb { width: 20px; flex: none; display: flex; flex-direction: column; background: #f7f7f7; }
.sa { width: 12px; height: 8px; margin: 6px 4px; flex: none; }
.thumb { background: #cdcdcd; flex: none; margin-bottom: auto; }
.th-tree { margin-top: 68px; height: 202px; }
.th-list { margin-top: 313px; height: 162px; }
.th-log { margin-top: 162px; height: 22px; }

.sub-right { width: 386px; flex: none; }
.prog { height: 562px; width: 386px; border: 1px solid #a5a5a5; border-bottom: 0; }
.prog-tools { height: 41px; display: flex; align-items: center; padding-left: 3px; }
.tn { width: 36.500px; }
.prog-body { display: flex; }
.strip { width: 36px; flex: none; padding-left: 2px; display: flex; flex-direction: column; align-items: flex-start; }
.si { width: 32px; height: 32px; display: flex; align-items: center; justify-content: center; border: 1px solid transparent; flex: none; }
.si svg { width: 26px; height: 26px; }
.si.on { background: #c1dbf2; border-color: #97c4e9; }
.plist { width: 348px; height: 518px; border: 1px solid #8b9097; background: #fff; display: flex; overflow: hidden; }
.plist-rows { width: 325px; flex: none; }
.row { height: 20px; display: flex; align-items: center; font-size: 14px; line-height: 20px; white-space: nowrap; overflow: hidden; color: #111; }
.ln { width: 59px; flex: none; padding-left: 29px; color: #2323e6; font-size: 14px; background: linear-gradient(90deg, #d8d8d8 25px, transparent 25px); height: 20px; }
.ri { width: 20px; height: 20px; flex: none; }
.rt { margin-left: 6px; }
.row.jog { color: #1a1aef; }
.row.tool { color: #8b0a8b; }
.row.sel { background: #d8d8d8; }
.row.sel .ln { background: linear-gradient(90deg, #b8b8b8 25px, transparent 25px); }

.viewcol { flex: 1; display: flex; flex-direction: column; padding-left: 6px; min-width: 0; }
.vtabs { height: 23px; flex: none; display: flex; align-items: flex-end; }
.vtab { height: 20px; width: 85px; text-align: center; font-size: 14.500px; line-height: 17px; background: #efefef; border: 1px solid #dcdcdc; border-bottom: 0; }
.vtab.on { height: 23px; width: 90px; background: #fff; border-color: #e6e6e6; line-height: 20px; }
.viewrow { display: flex; height: 602px; flex: none; }
.scene { width: 1070px; height: 602px; flex: none; background: linear-gradient(#008080, #fffff0); overflow: hidden; }
.scene-svg { display: block; width: 1070px; height: 602px; }
.lbl { font-family: "Liberation Sans", sans-serif; font-size: 15px; }
.vstrip { width: 58px; flex: none; background: #fff; border-right: 1px solid #d0d0d0; padding: 2px 3px 0 0; }
.vi { height: 36px; display: flex; align-items: center; justify-content: center; position: relative; }
.vi svg { width: 30px; height: 30px; }
.vi.drop { justify-content: flex-start; padding-left: 5px; width: 58px; }
.tri { width: 0; height: 0; border: 5px solid transparent; border-top: 5px solid #111; border-bottom: 0; margin-left: 7px; margin-top: 2px; }

.bottom { height: 317px; flex: none; display: flex; padding-top: 6px; column-gap: 6px; }
.bottom .dock { flex: none; display: flex; flex-direction: column; }
.set-dock { width: 1241px; }
.log-dock { width: 298px; }
.stat-dock { width: 369px; }
.set-body { display: flex; padding-top: 6px; height: 256px; flex: none; }
.side-btns { display: grid; grid-template-columns: 53px 53px; grid-template-rows: 78px 79px 78px; gap: 7px; margin-left: 3px; align-self: flex-start; }
.sbtn { background: #e1e1e1; border: 1px solid #adadad; font-size: 14.500px; line-height: 20px; }
.sbtn.on { background: #cce4f7; border: 1px solid #005499; }
.tabw { margin-left: 10px; width: 1111px; margin-top: -1px; display: flex; flex-direction: column; }
.tabbar { display: flex; height: 22px; align-items: flex-end; flex: none; }
.tab { height: 20px; text-align: center; font-size: 14.500px; line-height: 18px; background: #efefef; border: 1px solid #dcdcdc; border-left: 0; border-bottom: 0; }
.tab.on { height: 23px; background: #fff; border-left: 1px solid #dcdcdc; line-height: 21px; margin-bottom: -1px; position: relative; }
.t47 { width: 47px; } .t58 { width: 58px; } .t60 { width: 60px; } .t61 { width: 61px; } .t44 { width: 44px; } .t45 { width: 45px; } .t59 { width: 59px; }
.tabpanel { height: 228px; background: #fff; border: 1px solid #dcdcdc; display: flex; padding: 12px 0 0 12px; flex: none; }
.ftable { width: 400px; height: 201px; border: 1.500px solid #8b9097; flex: none; }
.fhead { display: flex; height: 29px; }
.c { border-right: 1px solid #e4e4e4; line-height: 29px; font-size: 14.500px; }
.c1 { width: 40px; padding-left: 5px; }
.c2 { width: 32.500px; padding-left: 5px; }
.c3 { width: 43.500px; padding-left: 5px; }
.c4 { width: 43.500px; padding-left: 6px; border-right: 0; }
.form { width: 206px; margin-left: 7px; flex: none; }
.frow { display: flex; align-items: center; height: 21px; }
.f2 { margin-top: 6px; }
.l1 { width: 35px; flex: none; }
.l2 { width: 104px; flex: none; white-space: nowrap; }
.inp { width: 171px; height: 21px; border: 1px solid #8b9097; background: #fff; }
.spin { width: 102px; height: 21px; border: 1px solid #8b9097; display: flex; align-items: center; padding-left: 2px; }
.val { font-family: "Liberation Mono", monospace; font-size: 13.330px; }
.sbx { margin-left: auto; margin-right: 1px; width: 14px; height: 17px; border: 1px solid #adadad; background: #e8e8e8; display: flex; flex-direction: column; align-items: center; justify-content: space-evenly; }
.sup { width: 0; height: 0; border: 4px solid transparent; border-bottom: 5px solid #111; border-top: 0; }
.sdn { width: 0; height: 0; border: 4px solid transparent; border-top: 5px solid #111; border-bottom: 0; }
.btn { width: 91px; height: 26px; background: #e1e1e1; border: 1px solid #adadad; font-size: 14.500px; line-height: 22px; display: block; }
.est { margin: 7px 0 0 114px; }
.btn-col { width: 91px; margin-left: 7px; margin-top: 1px; display: flex; flex-direction: column; gap: 8px; flex: none; }
.create-col { margin-left: 8px; padding-top: 174px; }
.statusline { flex: 1; padding: 5px 0 0 962px; }
.statusline i { width: 1px; height: 27px; background: #d8d8d8; }

.ltabs { display: flex; height: 25px; align-items: flex-end; padding-left: 1px; flex: none; }
.ltab { height: 19px; display: flex; align-items: center; justify-content: center; background: #efefef; border: 1px solid #dcdcdc; border-left: 0; border-bottom: 0; font-size: 14.500px; line-height: 18px; gap: 5px; }
.ltab svg { width: 15px; height: 15px; flex: none; }
.t-e { width: 77px; border-left: 1px solid #dcdcdc; }
.t-w { width: 78px; }
.t-i { width: 79px; }
.ltab.on { height: 22px; background: #fff; }
.logframe { width: 295px; height: 231px; border: 1px solid #dcdcdc; padding: 1px 0 0 0; background: #fff; flex: none; }
.logbox { width: 293px; height: 227px; border: 1.500px solid #777; display: flex; background: #fff; overflow: hidden; }
.logtext { width: 271px; flex: none; font-family: "Liberation Mono", monospace; font-size: 13.330px; line-height: 17px; padding: 0 0 0 4px; white-space: nowrap; }
.logtext u { font-family: "Noto Sans CJK SC", sans-serif; font-size: 15px; line-height: 0; }

.stat-body { display: flex; padding-top: 18px; }
.axes { padding: 3px 0 0 37px; display: flex; flex-direction: column; gap: 13px; width: 292px; flex: none; }
.axrow { display: flex; align-items: center; height: 50px; }
.axl { width: 40px; text-align: center; font-family: "Liberation Sans", sans-serif; font-size: 34px; margin-right: 15px; }
.lcd { width: 200px; height: 50px; background: #000; border: 3px solid #0ab2dc; display: flex; align-items: center; justify-content: flex-end; padding-right: 2px; overflow: hidden; }
.lcd span { font-family: "Liberation Mono", monospace; font-size: 32px; color: #3fe6ee; transform: scaleY(1.45); line-height: 44px; }
.stat-side { width: 58px; margin-left: 6px; display: flex; flex-direction: column; align-items: center; }
.led { width: 20px; height: 20px; border-radius: 50%; background: #00f500; flex: none; }
.stl { font-size: 14.500px; line-height: 20px; height: 20px; white-space: nowrap; margin-top: 4px; }
.stbtn { width: 43px; height: 38px; margin-top: 9px; background: #e1e1e1; border: 1px solid #adadad; display: flex; align-items: center; justify-content: center; flex: none; }
.stbtn svg { width: 34px; height: 34px; }
.stop { font-family: "Liberation Sans", sans-serif; font-size: 11px; font-weight: 700; fill: #f6e8e0; text-anchor: middle; }

.taskbar { height: 38px; flex: none; background: #21373f; display: flex; align-items: center; position: relative; }
.ti { width: 46px; height: 38px; display: flex; align-items: center; justify-content: center; flex: none; position: relative; }
.ti svg { width: 20px; height: 20px; }
.t-start { margin-left: -2px; }
.run::after { content: ""; position: absolute; left: 5px; right: 6px; bottom: 0; height: 3px; background: #63a9dd; }
.act { background: #3f5964; }
.act::after { left: 0; right: 0; }
.tray { margin-left: auto; display: flex; align-items: center; height: 38px; color: #fff; padding-right: 32px; }
.tr { width: 18px; height: 18px; margin-left: 12px; flex: none; }
.tg11 { margin-left: 11px; }
.tg13 { margin-left: 13px; }
.t-caret { width: 18px; height: 11px; margin-left: 0; }
.tr-t { margin-left: 11px; font-size: 15.500px; }
.tr-pin { margin-left: 19px; width: 18px; height: 18px; background: #fff; color: #21373f; font-size: 13px; line-height: 18px; text-align: center; }
.tr-time { margin-left: 26px; font-size: 14px; width: 36px; }
.t-note { margin-left: 25px; width: 20px; height: 20px; }
.watermark { position: absolute; left: 1626px; top: 1022px; font-size: 37px; line-height: 50px; color: rgba(214, 214, 214, .8); white-space: nowrap; }
```
